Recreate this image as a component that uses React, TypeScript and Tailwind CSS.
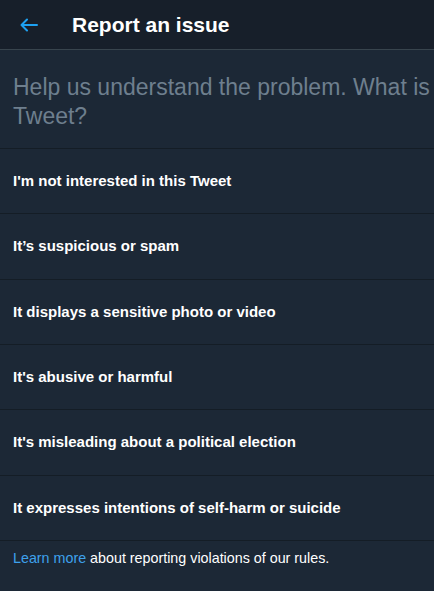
import React from 'react';

const reasons = [
  "I'm not interested in this Tweet",
  'It’s suspicious or spam',
  'It displays a sensitive photo or video',
  "It's abusive or harmful",
  "It's misleading about a political election",
  'It expresses intentions of self-harm or suicide',
];

const App = () => {
  return (
    <div className="min-h-[591px] w-[434px] bg-[#1c2836] font-['Liberation_Sans',Arial,sans-serif]">
      {/* Header */}
      <div className="flex h-[50px] items-center border-b border-[#38444d] bg-[#171f2a]">
        <div className="flex w-[72px] pl-[20px]">
          <svg width="18" height="14" viewBox="0 0 18 14" fill="none" stroke="#1da1f2" strokeWidth="2" strokeLinecap="round" strokeLinejoin="round">
            <path d="M17 7H1.5M7 1.5L1.5 7L7 12.5" />
          </svg>
        </div>
        <h1 className="text-[21px] font-bold text-white">Report an issue</h1>
      </div>

      {/* Prompt */}
      <p className="pl-[13px] pr-[4px] pt-[23px] pb-[17px] text-[23px] leading-[29px] text-[#6e7f8e]">
        Help us understand the problem. What is Tweet?
      </p>

      {/* Reasons */}
      {reasons.map((reason) => (
        <div
          key={reason}
          className="flex h-[65.33px] items-center border-t border-[#141d26] px-[13px] text-[15px] font-bold text-white"
        >
          {reason}
        </div>
      ))}

      {/* Footer */}
      <div className="border-t border-[#141d26] px-[13px] pt-[7px] text-[14.3px] text-white">
        <a className="text-[#3ea1ec]">Learn more</a> about reporting violations of our rules.
      </div>
    </div>
  );
};

export default App;
